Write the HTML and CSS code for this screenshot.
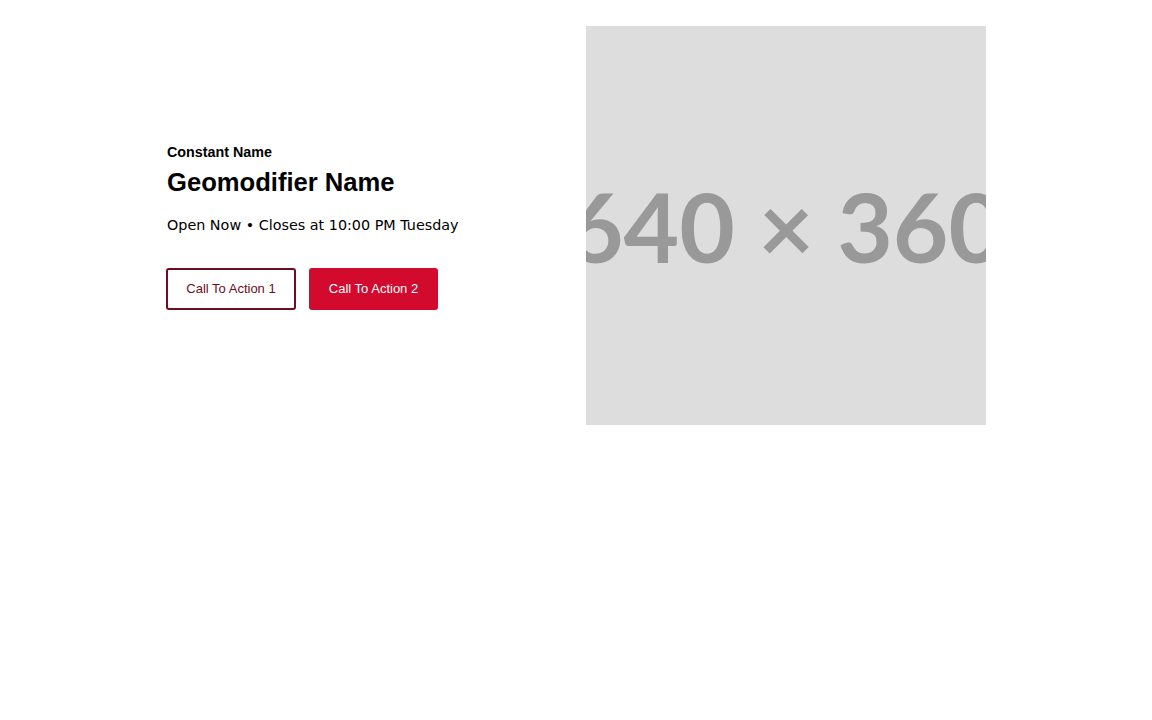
FILE: index.html
```html
<!DOCTYPE html>
<html lang="en">
<head>
<meta charset="utf-8">
<title>Hero</title>
<link rel="stylesheet" href="styles.css">
</head>
<body>
<section class="hero">
  <div class="hero-text">
    <div class="constant">Constant Name</div>
    <h1 class="geo">Geomodifier Name</h1>
    <div class="hours">Open Now • Closes at 10:00 PM Tuesday</div>
    <div class="ctas">
      <a class="btn btn-outline" href="#">Call To Action 1</a>
      <a class="btn btn-solid" href="#">Call To Action 2</a>
    </div>
  </div>
  <div class="hero-image">
    <span class="placeholder">640 × 360</span>
  </div>
</section>
</body>
</html>
```

FILE: styles.css
```css
html, body {
  margin: 0;
  padding: 0;
  background: #fff;
}

.hero {
  width: 820px;
  margin: 26px auto 0;
  display: flex;
  align-items: center;
  justify-content: space-between;
}

.hero-text {
  display: flex;
  flex-direction: column;
  align-items: flex-start;
  padding-top: 1px;
}

.constant {
  padding-left: 1px;
  font-family: "Liberation Sans", Arial, sans-serif;
  font-weight: bold;
  font-size: 14.3px;
  line-height: 18px;
  color: #000;
}

.geo {
  margin: 5px 0 0;
  padding-left: 1px;
  font-family: "Liberation Sans", Arial, sans-serif;
  font-weight: bold;
  font-size: 25.6px;
  line-height: 32px;
  color: #000;
}

.hours {
  margin-top: 17px;
  padding-left: 1px;
  font-family: "DejaVu Sans", sans-serif;
  font-size: 14.35px;
  line-height: 20px;
  color: #000;
}

.ctas {
  display: flex;
  gap: 13px;
  margin-top: 33px;
}

.btn {
  box-sizing: border-box;
  display: flex;
  align-items: center;
  justify-content: center;
  height: 42px;
  border-radius: 3px;
  font-family: "Liberation Sans", Arial, sans-serif;
  font-size: 13px;
  text-decoration: none;
}

.btn-outline {
  width: 130px;
  border: 2px solid #6e0c20;
  color: #6e0c20;
  background: #fff;
}

.btn-solid {
  width: 129px;
  background: #d10a2e;
  color: #fff;
}

.hero-image {
  width: 400px;
  height: 399px;
  background: #dddddd;
  overflow: hidden;
  display: flex;
  align-items: center;
  justify-content: center;
}

.placeholder {
  flex: none;
  white-space: nowrap;
  font-family: Lato, "Open Sans", sans-serif;
  font-weight: bold;
  font-size: 96px;
  line-height: 1;
  color: #999999;
}
```
